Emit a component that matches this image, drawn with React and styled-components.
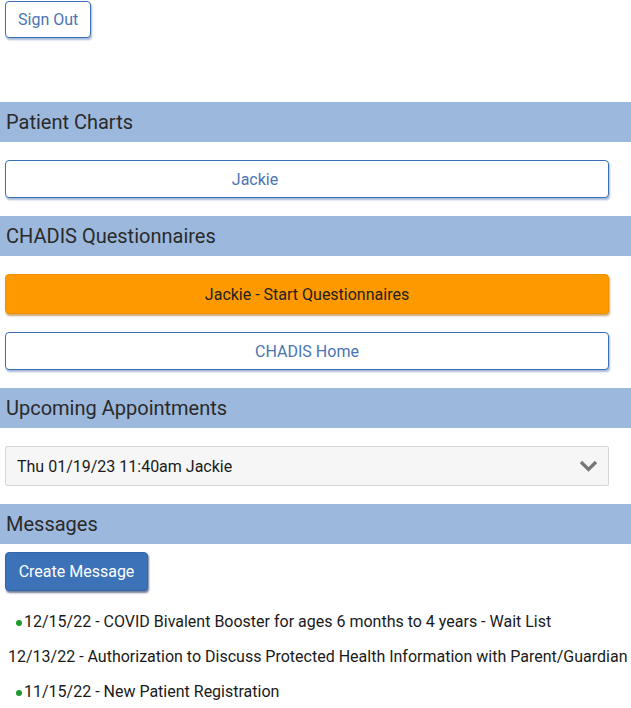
import React from 'react';
import styled, { createGlobalStyle } from 'styled-components';

const GlobalStyle = createGlobalStyle`
  body {
    margin: 0;
    background: #fff;
    font-family: Roboto, "Liberation Sans", Arial, sans-serif;
    color: #222;
  }
`;

const Page = styled('div')`
  display: flex;
  flex-direction: column;
  width: 631px;
`;

const TopBar = styled('div')`
  padding: 1px 0 0 5px;
  height: 102px;
  box-sizing: border-box;
`;

const OutlineButton = styled('button')`
  display: block;
  box-sizing: border-box;
  height: ${(p) => p.height || 38}px;
  width: ${(p) => (p.wide ? '604px' : 'auto')};
  padding: 0 ${(p) => (p.wide ? 0 : 12)}px;
  padding-right: ${(p) => p.shift || (p.wide ? 0 : 12)}px;
  background: #fff;
  color: #4a74b4;
  border: 1px solid #3a6fb6;
  border-radius: 4px;
  box-shadow: 1px 2px 2px rgba(58, 100, 170, 0.45);
  font-family: inherit;
  font-size: 16px;
  text-align: center;
  cursor: pointer;
`;

const OrangeButton = styled(OutlineButton)`
  background: #ff9900;
  color: #222;
  border-color: #f29100;
  box-shadow: 1px 2px 2px rgba(160, 95, 0, 0.55);
`;

const SectionHeader = styled('div')`
  height: 40px;
  display: flex;
  align-items: center;
  padding-left: 6px;
  background: #9cb8dc;
  color: #2a2a2a;
  font-size: 20px;
`;

const SectionBody = styled('div')`
  display: flex;
  flex-direction: column;
  gap: ${(p) => p.gap || 18}px;
  padding: ${(p) => p.pad || '18px 0 18px 5px'};
`;

const SelectBox = styled('div')`
  box-sizing: border-box;
  width: 604px;
  height: 40px;
  display: flex;
  align-items: center;
  justify-content: space-between;
  padding: 0 10px 0 11px;
  background: #f6f6f6;
  border: 1px solid #d6d6d6;
  border-radius: 2px;
  font-size: 16px;
  color: #1a1a1a;
`;

const BlueButton = styled('button')`
  align-self: flex-start;
  box-sizing: border-box;
  height: 39px;
  width: 143px;
  background: #3b72b8;
  color: #fff;
  border: 1px solid #3366a8;
  border-radius: 4px;
  box-shadow: 1px 2px 2px rgba(20, 40, 80, 0.6);
  font-family: inherit;
  font-size: 16px;
  cursor: pointer;
`;

const MessageList = styled('ul')`
  list-style: none;
  margin: 0;
  padding: 13px 0 0 0;
`;

const MessageItem = styled('li')`
  display: flex;
  align-items: center;
  height: 35px;
  padding-left: ${(p) => (p.unread ? 16 : 8)}px;
  font-size: 16px;
  color: #1a1a1a;
  white-space: nowrap;
`;

const Dot = styled('span')`
  width: 6px;
  height: 6px;
  border-radius: 50%;
  background: #1d9a2e;
  margin-right: 2px;
  margin-top: 2px;
`;

const Chevron = () => (
  <svg width="19" height="12" viewBox="0 0 19 12">
    <path d="M2 2 L9.5 9.5 L17 2" fill="none" stroke="#777" strokeWidth="3.2" />
  </svg>
);

const messages = [
  { id: 1, unread: true, text: '12/15/22 - COVID Bivalent Booster for ages 6 months to 4 years - Wait List' },
  { id: 2, unread: false, text: '12/13/22 - Authorization to Discuss Protected Health Information with Parent/Guardian' },
  { id: 3, unread: true, text: '11/15/22 - New Patient Registration' },
];

const App = () => (
  <Page>
    <GlobalStyle />
    <TopBar>
      <OutlineButton height={37}>Sign Out</OutlineButton>
    </TopBar>

    <SectionHeader>Patient Charts</SectionHeader>
    <SectionBody>
      <OutlineButton wide shift={104}>Jackie</OutlineButton>
    </SectionBody>

    <SectionHeader>CHADIS Questionnaires</SectionHeader>
    <SectionBody>
      <OrangeButton wide height={40}>Jackie - Start Questionnaires</OrangeButton>
      <OutlineButton wide>CHADIS Home</OutlineButton>
    </SectionBody>

    <SectionHeader>Upcoming Appointments</SectionHeader>
    <SectionBody>
      <SelectBox>
        <span>Thu 01/19/23 11:40am Jackie</span>
        <Chevron />
      </SelectBox>
    </SectionBody>

    <SectionHeader>Messages</SectionHeader>
    <SectionBody pad="8px 0 0 5px" gap={0}>
      <BlueButton>Create Message</BlueButton>
    </SectionBody>
    <MessageList>
      {messages.map((m) => (
        <MessageItem key={m.id} unread={m.unread}>
          {m.unread && <Dot />}
          {m.text}
        </MessageItem>
      ))}
    </MessageList>
  </Page>
);

export default App;
